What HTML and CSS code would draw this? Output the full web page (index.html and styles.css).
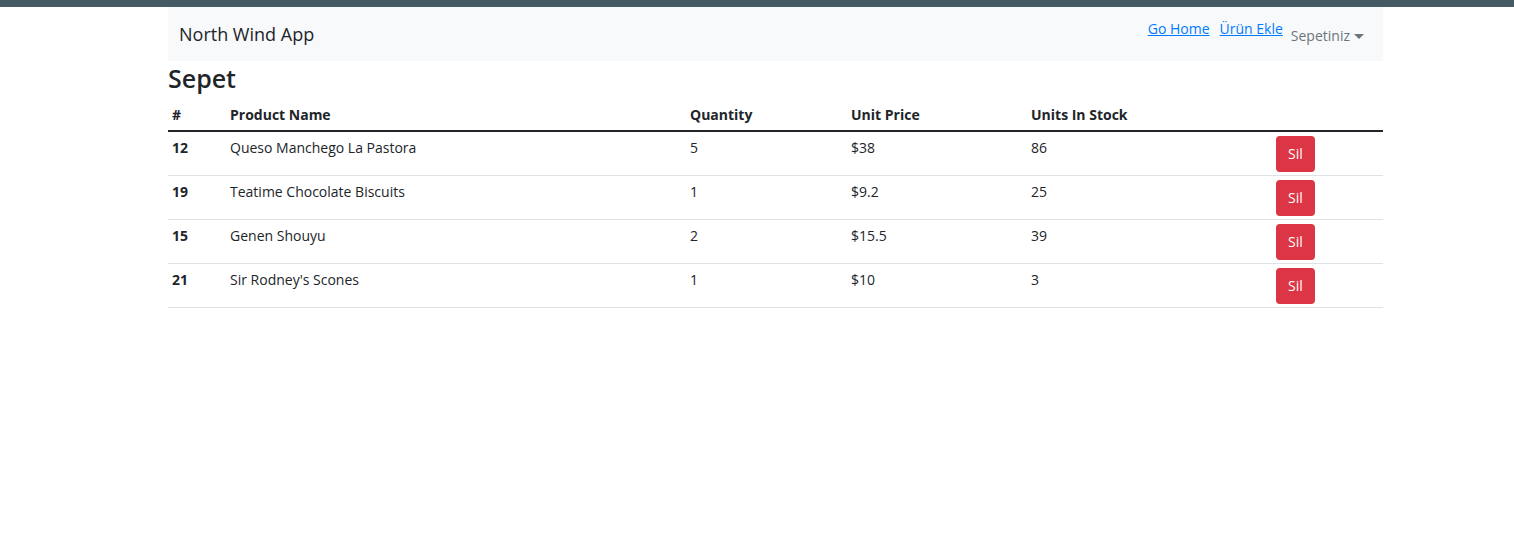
FILE: index.html
```html
<!DOCTYPE html>
<html lang="tr">
<head>
<meta charset="utf-8">
<title>North Wind App</title>
<link rel="stylesheet" href="styles.css">
</head>
<body>
<div class="topbar"></div>
<div class="page">
  <nav class="navbar">
    <span class="brand">North Wind App</span>
    <div class="nav-right">
      <a class="nav-a" href="#">Go Home</a>
      <a class="nav-a" href="#">Ürün Ekle</a>
      <span class="dropdown">Sepetiniz<span class="caret"></span></span>
    </div>
  </nav>
  <h2 class="title">Sepet</h2>
  <table class="cart">
    <thead>
      <tr>
        <th class="c-id">#</th>
        <th class="c-name">Product Name</th>
        <th class="c-qty">Quantity</th>
        <th class="c-price">Unit Price</th>
        <th class="c-stock">Units In Stock</th>
        <th class="c-act"></th>
      </tr>
    </thead>
    <tbody>
      <tr>
        <th>12</th><td>Queso Manchego La Pastora</td><td>5</td><td>$38</td><td>86</td>
        <td><button class="btn-danger">Sil</button></td>
      </tr>
      <tr>
        <th>19</th><td>Teatime Chocolate Biscuits</td><td>1</td><td>$9.2</td><td>25</td>
        <td><button class="btn-danger">Sil</button></td>
      </tr>
      <tr>
        <th>15</th><td>Genen Shouyu</td><td>2</td><td>$15.5</td><td>39</td>
        <td><button class="btn-danger">Sil</button></td>
      </tr>
      <tr>
        <th>21</th><td>Sir Rodney's Scones</td><td>1</td><td>$10</td><td>3</td>
        <td><button class="btn-danger">Sil</button></td>
      </tr>
    </tbody>
  </table>
</div>
</body>
</html>
```

FILE: styles.css
```css
* { box-sizing: border-box; }
html, body { margin: 0; padding: 0; background: #fff; }
body {
  font-family: "Open Sans", "Noto Sans", sans-serif;
  font-size: 14px;
  line-height: 24px;
  color: #212529;
}
.topbar { height: 7px; background: #455a64; }
.page { margin-left: 168px; width: 1215px; }

.navbar {
  height: 54px;
  background: #f8f9fa;
  display: flex;
  justify-content: space-between;
  align-items: flex-start;
  padding: 0 19px 0 11px;
}
.brand { font-size: 18px; line-height: 27px; margin-top: 14px; color: #212529; }
.nav-right { display: flex; align-items: flex-start; padding-top: 11px; }
.nav-a { color: #007bff; text-decoration: underline; margin-right: 10px; line-height: 21px; }
.nav-a + .nav-a { margin-right: 8px; }
.dropdown { color: #6c757d; line-height: 21px; margin-top: 7px; display: flex; align-items: center; }
.caret {
  display: inline-block; width: 0; height: 0; margin-left: 4px; margin-top: 1px;
  border-top: 5px solid #6c757d; border-left: 5px solid transparent; border-right: 5px solid transparent;
}

.title { margin: 2px 0 0; font-size: 25px; line-height: 30px; font-weight: 600; color: #212529; }

.cart { border-collapse: collapse; width: 1215px; table-layout: fixed; }
.cart thead th {
  text-align: left; font-weight: 700; padding: 10px 4px 3px;
  border-bottom: 2px solid #212529; vertical-align: bottom;
}
.cart tbody th, .cart tbody td {
  text-align: left; padding: 4px 4px 3px; border-bottom: 1px solid #dee2e6; vertical-align: top;
}
.cart tbody th { font-weight: 700; }
.c-id { width: 58px; }
.c-name { width: 460px; }
.c-qty { width: 161px; }
.c-price { width: 180px; }
.c-stock { width: 245px; }
.c-act { width: 111px; }

.btn-danger {
  display: block; height: 36px; padding: 0 12px; border: 0; border-radius: 4px;
  background: #dc3545; color: #fff; font-family: inherit; font-size: 14px; line-height: 36px; cursor: pointer;
}
```
